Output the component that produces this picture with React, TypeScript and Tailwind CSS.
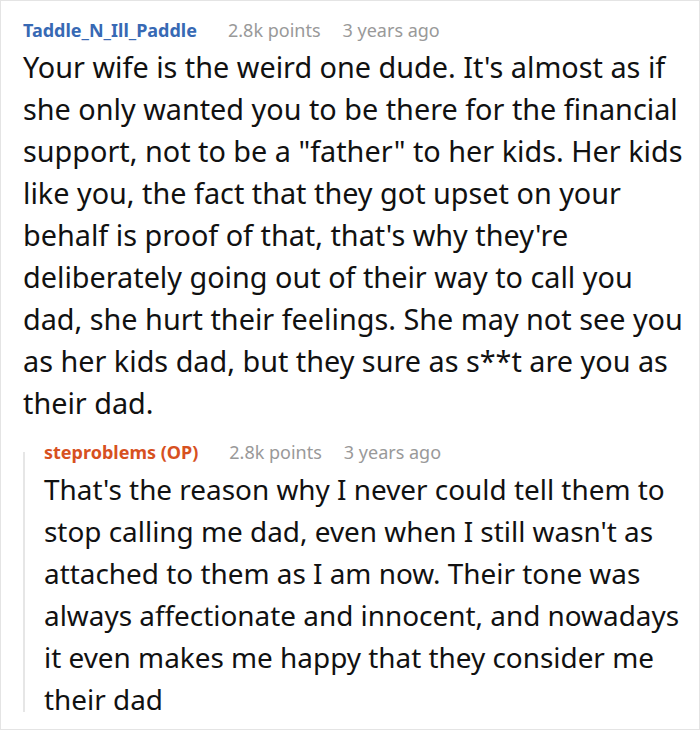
import React from "react";

const font = { fontFamily: '"Noto Sans", "Open Sans", sans-serif' };

function Meta({ points, time }: { points: string; time: string }) {
  return (
    <>
      <span className="ml-[31px] text-[18px] text-[#999999]">{points}</span>
      <span className="ml-[22px] text-[18px] text-[#999999]">{time}</span>
    </>
  );
}

function Lines({ lines, size }: { lines: string[]; size: "a" | "b" }) {
  return (
    <div
      className={
        (size === "a" ? "text-[28.8px]" : "text-[27.9px]") +
        " leading-[42px] text-[#111111] whitespace-nowrap"
      }
    >
      {lines.map((l, i) => (
        <div key={i}>{l}</div>
      ))}
    </div>
  );
}

export default function App() {
  const first = [
    "Your wife is the weird one dude. It's almost as if",
    "she only wanted you to be there for the financial",
    'support, not to be a "father" to her kids. Her kids',
    "like you, the fact that they got upset on your",
    "behalf is proof of that, that's why they're",
    "deliberately going out of their way to call you",
    "dad, she hurt their feelings. She may not see you",
    "as her kids dad, but they sure as s**t are you as",
    "their dad.",
  ];
  const reply = [
    "That's the reason why I never could tell them to",
    "stop calling me dad, even when I still wasn't as",
    "attached to them as I am now. Their tone was",
    "always affectionate and innocent, and nowadays",
    "it even makes me happy that they consider me",
    "their dad",
  ];
  return (
    <div
      className="w-[700px] h-[730px] box-border border border-[#e4e4e4] bg-white overflow-hidden"
      style={font}
    >
      <div className="pl-[22px] pt-[18px]">
        <div className="flex items-baseline leading-[22px]">
          <span className="text-[18px] font-bold text-[#3769b4]">Taddle_N_Ill_Paddle</span>
          <Meta points="2.8k points" time="3 years ago" />
        </div>
        <div className="mt-[5px]">
          <Lines lines={first} size="a" />
        </div>
        <div className="flex mt-[17px]">
          <div className="w-[2px] bg-[#e6e6e6] mt-[11px] mb-[8px] shrink-0" />
          <div className="pl-[19px]">
            <div className="flex items-baseline leading-[22px]">
              <span className="text-[18px] font-bold text-[#d7511f]">steproblems (OP)</span>
              <Meta points="2.8k points" time="3 years ago" />
            </div>
            <div className="mt-[5px]">
              <Lines lines={reply} size="b" />
            </div>
          </div>
        </div>
      </div>
    </div>
  );
}
